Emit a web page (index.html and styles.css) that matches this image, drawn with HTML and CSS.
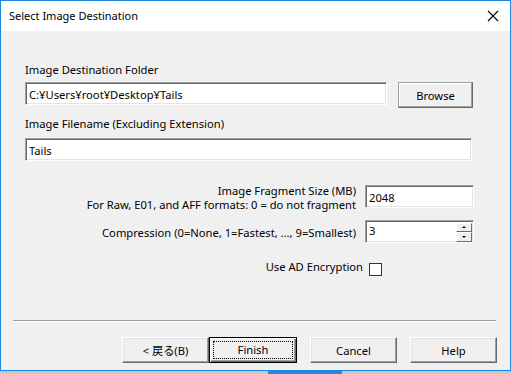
FILE: index.html
```html
<!DOCTYPE html>
<html lang="en">
<head>
    <meta charset="UTF-8">
    <title>Select Image Destination</title>
    <link rel="stylesheet" href="styles.css">
</head>
<body>
    <div class="window">
        <!-- Title bar -->
        <div class="titlebar">
            <span class="title">Select Image Destination</span>
            <svg class="close" width="12" height="12" viewBox="0 0 12 12">
                <path d="M1 1 L11 11 M11 1 L1 11" stroke="#000" stroke-width="1.1" fill="none"/>
            </svg>
        </div>

        <div class="client">
            <div class="form">
                <div class="label first">Image Destination Folder</div>
                <div class="path-row">
                    <input class="field path" type="text" value="C:¥Users¥root¥Desktop¥Tails">
                    <button class="btn browse">Browse</button>
                </div>

                <div class="label second">Image Filename (Excluding Extension)</div>
                <input class="field filename" type="text" value="Tails">

                <!-- Options -->
                <div class="opt-row fragment">
                    <div class="opt-label">
                        <div>Image Fragment Size (MB)</div>
                        <div>For Raw, E01, and AFF formats: 0 = do not fragment</div>
                    </div>
                    <input class="field small" type="text" value="2048">
                </div>
                <div class="opt-row compression">
                    <div class="opt-label">Compression (0=None, 1=Fastest, ..., 9=Smallest)</div>
                    <div class="field small spin">
                        <span class="spin-value">3</span>
                        <span class="spin-btns">
                            <span class="spin-btn up"></span>
                            <span class="spin-btn down"></span>
                        </span>
                    </div>
                </div>
                <div class="check-row">
                    <span>Use AD Encryption</span>
                    <span class="checkbox"></span>
                </div>
            </div>

            <div class="separator"></div>

            <!-- Wizard buttons -->
            <div class="buttons">
                <button class="btn">&lt; 戻る(B)</button>
                <button class="btn default"><span class="focus">Finish</span></button>
                <button class="btn cancel">Cancel</button>
                <button class="btn help">Help</button>
            </div>
        </div>
    </div>
    <div class="desktop"></div>
</body>
</html>
```

FILE: styles.css
```css
body {
    margin: 0;
    width: 511px;
    height: 374px;
    overflow: hidden;
    font-family: "Noto Sans", "Noto Sans CJK JP", sans-serif;
    font-size: 11.2px;
    color: #000;
    background: #d4d4d4;
}
.window {
    box-sizing: border-box;
    width: 511px;
    height: 371px;
    border: 1px solid #1c86dc;
    display: flex;
    flex-direction: column;
}
.titlebar {
    height: 30px;
    flex: none;
    background: #fff;
    display: flex;
    align-items: center;
    justify-content: space-between;
    padding: 0 11px 0 8px;
}
.title {
    font-size: 11px;
    line-height: 30px;
    color: #000;
}
.close {
    margin-top: -1px;
}
.client {
    flex: 1;
    background: #f0f0f0;
}
.form {
    padding: 31px 36px 0 24px;
}
.label {
    line-height: 15px;
    white-space: nowrap;
}
.label.second {
    margin-top: 8px;
}
.path-row {
    display: flex;
    gap: 11px;
    margin-top: 5px;
    align-items: flex-start;
}

/* sunken edit boxes */
.field {
    box-sizing: border-box;
    display: block;
    height: 23px;
    margin: 0;
    padding: 1px 3px 0 3px;
    font: inherit;
    line-height: 17px;
    color: #000;
    background: #fff;
    border: 1px solid;
    border-color: #a0a0a0 #fff #fff #a0a0a0;
    box-shadow: inset 1px 1px #696969, inset -1px -1px #e3e3e3;
    outline: none;
}
.field.path {
    width: 362px;
}
.field.filename {
    width: 447px;
    margin-top: 7px;
}
.field.small {
    width: 109px;
    flex: none;
}

/* raised push buttons */
.btn {
    box-sizing: border-box;
    height: 26px;
    width: 87px;
    margin: 0;
    padding: 0;
    font: inherit;
    color: #000;
    background: #f0f0f0;
    border: 1px solid;
    border-color: #fff #696969 #696969 #fff;
    box-shadow: inset -1px -1px #a0a0a0, inset 1px 1px #e3e3e3;
}
.btn.browse {
    width: 75px;
    border-color: #a0a0a0 #696969 #696969 #a0a0a0;
    box-shadow: inset -1px -1px #a0a0a0, inset 1px 1px #fff;
}
.btn.default {
    width: 88px;
    padding: 3px;
    border-color: #000;
    box-shadow: inset 1px 1px #fff, inset -1px -1px #696969, inset -2px -2px #a0a0a0;
    display: flex;
}
.focus {
    flex: 1;
    border: 1px dotted #000;
    line-height: 16px;
}

.opt-row {
    display: flex;
    justify-content: flex-end;
    align-items: flex-start;
    gap: 9px;
}
.opt-row.fragment {
    margin-top: 24px;
}
.opt-row.compression {
    margin-top: 9px;
}
.opt-label {
    text-align: right;
    line-height: 14px;
    white-space: nowrap;
}
.fragment .opt-label {
    margin-top: -1px;
    margin-bottom: -1px;
}
.compression .opt-label {
    line-height: 15px;
    padding-top: 5px;
}
.spin {
    display: flex;
    justify-content: space-between;
    padding: 1px 0 0 3px;
}
.spin-btns {
    display: flex;
    flex-direction: column;
    width: 16px;
    margin: 1px 1px 0 0;
}
.spin-btn {
    box-sizing: border-box;
    height: 9px;
    background: #f0f0f0;
    border: 1px solid;
    border-color: #fff #696969 #696969 #fff;
    position: relative;
}
.spin-btn + .spin-btn {
    height: 10px;
}
.spin-btn::after {
    content: "";
    position: absolute;
    left: 5px;
    top: 2px;
    border-left: 2px solid transparent;
    border-right: 2px solid transparent;
}
.spin-btn.up::after {
    border-bottom: 2px solid #000;
}
.spin-btn.down::after {
    top: 3px;
    border-top: 2px solid #000;
}

.check-row {
    display: flex;
    justify-content: flex-end;
    align-items: flex-start;
    gap: 6px;
    margin-top: 16px;
    padding-right: 92px;
    line-height: 15px;
}
.checkbox {
    box-sizing: border-box;
    width: 13px;
    height: 13px;
    margin-top: 4px;
    background: #fff;
    border: 1px solid #333;
}

.separator {
    margin: 44px 14px 0 12px;
    height: 1px;
    background: #a0a0a0;
    border-bottom: 1px solid #fff;
}
.buttons {
    display: flex;
    justify-content: flex-end;
    margin-top: 15px;
    padding-right: 13px;
}
.btn.cancel,
.btn.help {
    margin-left: 13px;
}

.desktop {
    height: 3px;
    background: linear-gradient(to right, #c8c8c8 0, #c8c8c8 268px, #2f86d6 268px, #2f86d6 342px, #c8c8c8 342px);
}
```
